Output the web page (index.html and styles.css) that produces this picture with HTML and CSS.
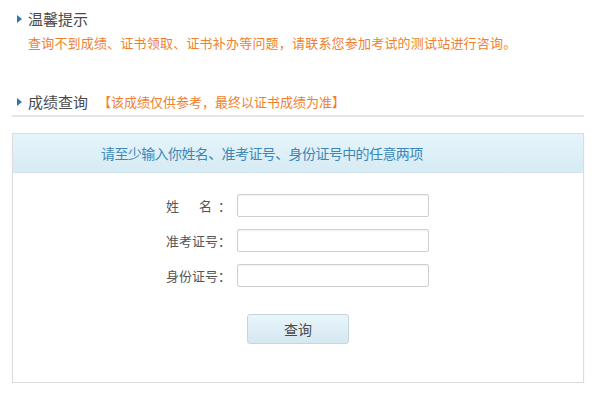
FILE: index.html
```html
<!DOCTYPE html>
<html lang="zh-CN">
<head>
<meta charset="utf-8">
<title>成绩查询</title>
<link rel="stylesheet" href="styles.css">
</head>
<body>
<div class="page">
  <div class="sec-title first"><span class="arrow"></span>温馨提示</div>
  <p class="notice">查询不到成绩、证书领取、证书补办等问题，请联系您参加考试的测试站进行咨询。</p>
  <div class="sec-title second"><span class="arrow"></span>成绩查询<span class="note">【该成绩仅供参考，最终以证书成绩为准】</span></div>
  <div class="divider"></div>
  <div class="box">
    <div class="box-head">请至少输入你姓名、准考证号、身份证号中的任意两项</div>
    <form class="form">
      <div class="row"><label class="lbl"><span class="lbl-text justify">姓名</span>：</label><input class="field" type="text"></div>
      <div class="row"><label class="lbl"><span class="lbl-text">准考证号</span>：</label><input class="field" type="text"></div>
      <div class="row"><label class="lbl"><span class="lbl-text">身份证号</span>：</label><input class="field" type="text"></div>
      <div class="actions"><button class="btn" type="button">查询</button></div>
    </form>
  </div>
</div>
</body>
</html>
```

FILE: styles.css
```css
html, body {
  margin: 0;
  padding: 0;
  background: #ffffff;
}
body {
  font-family: "Noto Sans CJK SC", "Noto Sans", sans-serif;
  color: #444;
}
.page {
  padding: 9px 16px 0 12px;
}
.sec-title {
  display: flex;
  align-items: center;
  font-size: 15px;
  line-height: 20px;
  height: 20px;
  color: #4a4a4a;
  padding-left: 5px;
}
.arrow {
  width: 0;
  height: 0;
  border-top: 4px solid transparent;
  border-bottom: 4px solid transparent;
  border-left: 5px solid #2a78ad;
  margin-right: 6px;
}
.notice {
  margin: 6px 0 0 16px;
  font-size: 13px;
  line-height: 16px;
  letter-spacing: 0.2px;
  color: #f07f30;
}
.second {
  margin-top: 41px;
}
.note {
  font-size: 13px;
  color: #f07f30;
  margin-left: 10px;
}
.divider {
  margin-top: 3px;
  height: 2px;
  background: #e6e6e6;
}
.box {
  margin-top: 16px;
  border: 1px solid #dcdcdc;
  box-shadow: 0 1px 2px rgba(0,0,0,0.06);
}
.box-head {
  height: 38px;
  line-height: 38px;
  font-size: 14px;
  letter-spacing: -0.6px;
  color: #3d88b8;
  padding-left: 88px;
  background: linear-gradient(#e6f4fb, #d6ebf4);
  border-bottom: 1px solid #d3e4ec;
}
.form {
  padding: 21px 0 38px 0;
  display: flex;
  flex-direction: column;
  gap: 12px;
}
.row {
  display: flex;
  align-items: center;
  height: 23px;
}
.lbl {
  width: 218px;
  padding-right: 6px;
  display: flex;
  justify-content: flex-end;
  font-size: 13px;
  color: #555;
}
.lbl-text {
  display: inline-block;
  width: 52px;
}
.justify {
  text-align: justify;
  text-align-last: justify;
  width: 46px;
  margin-right: 6px;
}
.field {
  box-sizing: border-box;
  width: 192px;
  height: 23px;
  margin: 0;
  border: 1px solid #cfcfcf;
  border-radius: 2px;
  box-shadow: inset 0 1px 2px rgba(0,0,0,0.06);
  background: #fff;
}
.actions {
  display: flex;
  padding-left: 234px;
  margin-top: 15px;
}
.btn {
  width: 102px;
  height: 30px;
  border: 1px solid #c4d7e0;
  border-radius: 3px;
  background: linear-gradient(#e9f5fb, #d5e7f0);
  font-family: "Noto Sans CJK SC", sans-serif;
  font-size: 14px;
  color: #4a4a4a;
  padding: 0;
}
```
